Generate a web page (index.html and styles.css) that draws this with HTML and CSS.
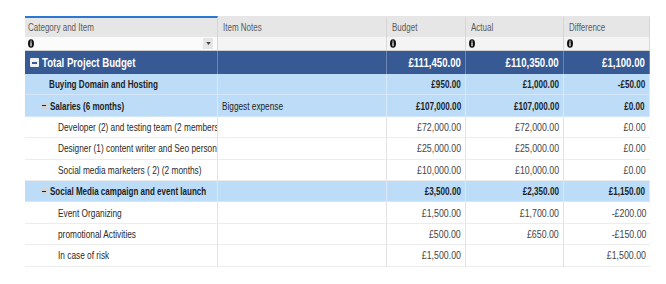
FILE: index.html
```html
<!DOCTYPE html>
<html>
<head>
<meta charset="utf-8">
<link rel="stylesheet" href="styles.css">
</head>
<body>
<div class="grid">
  <div class="row head">
    <div class="cell active"><span class="t">Category and Item</span></div>
    <div class="cell"><span class="t">Item Notes</span></div>
    <div class="cell"><span class="t">Budget</span></div>
    <div class="cell"><span class="t">Actual</span></div>
    <div class="cell"><span class="t">Difference</span></div>
  </div>
  <div class="row filter">
    <div class="cell fcell"><svg class="info" viewBox="0 0 7 10"><ellipse cx="3.5" cy="5" rx="3.5" ry="5" fill="#111"/><rect x="2.8" y="1.6" width="1.4" height="1.3" fill="#fff"/><rect x="2.8" y="3.6" width="1.4" height="4.6" fill="#fff"/></svg><span class="drop"><svg viewBox="0 0 6 4"><path d="M0 0h6L3 4z" fill="#444"/></svg></span></div>
    <div class="cell"></div>
    <div class="cell"><svg class="info" viewBox="0 0 7 10"><ellipse cx="3.5" cy="5" rx="3.5" ry="5" fill="#111"/><rect x="2.8" y="1.6" width="1.4" height="1.3" fill="#fff"/><rect x="2.8" y="3.6" width="1.4" height="4.6" fill="#fff"/></svg></div>
    <div class="cell"><svg class="info" viewBox="0 0 7 10"><ellipse cx="3.5" cy="5" rx="3.5" ry="5" fill="#111"/><rect x="2.8" y="1.6" width="1.4" height="1.3" fill="#fff"/><rect x="2.8" y="3.6" width="1.4" height="4.6" fill="#fff"/></svg></div>
    <div class="cell"><svg class="info" viewBox="0 0 7 10"><ellipse cx="3.5" cy="5" rx="3.5" ry="5" fill="#111"/><rect x="2.8" y="1.6" width="1.4" height="1.3" fill="#fff"/><rect x="2.8" y="3.6" width="1.4" height="4.6" fill="#fff"/></svg></div>
  </div>
  <div class="row total">
    <div class="cell"><span class="tog big"></span><span class="t">Total Project Budget</span></div>
    <div class="cell"></div>
    <div class="cell num"><span class="t">£111,450.00</span></div>
    <div class="cell num"><span class="t">£110,350.00</span></div>
    <div class="cell num"><span class="t">£1,100.00</span></div>
  </div>
  <div class="row group">
    <div class="cell lvl1"><span class="t">Buying Domain and Hosting</span></div>
    <div class="cell"></div>
    <div class="cell num"><span class="t">£950.00</span></div>
    <div class="cell num"><span class="t">£1,000.00</span></div>
    <div class="cell num"><span class="t">-£50.00</span></div>
  </div>
  <div class="row group">
    <div class="cell lvl1t"><span class="tog"></span><span class="t">Salaries (6 months)</span></div>
    <div class="cell note"><span class="t">Biggest expense</span></div>
    <div class="cell num"><span class="t">£107,000.00</span></div>
    <div class="cell num"><span class="t">£107,000.00</span></div>
    <div class="cell num"><span class="t">£0.00</span></div>
  </div>
  <div class="row item">
    <div class="cell lvl2"><span class="t">Developer (2) and testing team (2 members</span></div>
    <div class="cell"></div>
    <div class="cell num"><span class="t">£72,000.00</span></div>
    <div class="cell num"><span class="t">£72,000.00</span></div>
    <div class="cell num"><span class="t">£0.00</span></div>
  </div>
  <div class="row item">
    <div class="cell lvl2"><span class="t">Designer (1) content writer and Seo person</span></div>
    <div class="cell"></div>
    <div class="cell num"><span class="t">£25,000.00</span></div>
    <div class="cell num"><span class="t">£25,000.00</span></div>
    <div class="cell num"><span class="t">£0.00</span></div>
  </div>
  <div class="row item">
    <div class="cell lvl2"><span class="t">Social media marketers ( 2) (2 months)</span></div>
    <div class="cell"></div>
    <div class="cell num"><span class="t">£10,000.00</span></div>
    <div class="cell num"><span class="t">£10,000.00</span></div>
    <div class="cell num"><span class="t">£0.00</span></div>
  </div>
  <div class="row group">
    <div class="cell lvl1t"><span class="tog"></span><span class="t">Social Media campaign and event launch</span></div>
    <div class="cell"></div>
    <div class="cell num"><span class="t">£3,500.00</span></div>
    <div class="cell num"><span class="t">£2,350.00</span></div>
    <div class="cell num"><span class="t">£1,150.00</span></div>
  </div>
  <div class="row item">
    <div class="cell lvl2"><span class="t">Event Organizing</span></div>
    <div class="cell"></div>
    <div class="cell num"><span class="t">£1,500.00</span></div>
    <div class="cell num"><span class="t">£1,700.00</span></div>
    <div class="cell num"><span class="t">-£200.00</span></div>
  </div>
  <div class="row item">
    <div class="cell lvl2"><span class="t">promotional Activities</span></div>
    <div class="cell"></div>
    <div class="cell num"><span class="t">£500.00</span></div>
    <div class="cell num"><span class="t">£650.00</span></div>
    <div class="cell num"><span class="t">-£150.00</span></div>
  </div>
  <div class="row item">
    <div class="cell lvl2"><span class="t">In case of risk</span></div>
    <div class="cell"></div>
    <div class="cell num"><span class="t">£1,500.00</span></div>
    <div class="cell num"></div>
    <div class="cell num"><span class="t">£1,500.00</span></div>
  </div>
  <div class="row empty">
    <div class="cell"></div>
    <div class="cell"></div>
    <div class="cell"></div>
    <div class="cell"></div>
    <div class="cell"></div>
  </div>
</div>
</body>
</html>
```

FILE: styles.css
```css
html, body {
  margin: 0;
  padding: 0;
  background: #fff;
  overflow: hidden;
}
body {
  font-family: "Liberation Sans", Arial, sans-serif;
  font-size: 11px;
  color: #2a2a2a;
}
.grid {
  margin: 16px 0 0 25px;
  width: 625px;
  display: flex;
  flex-direction: column;
}
.row {
  display: grid;
  grid-template-columns: 193px 169px 79px 98px 86px;
  height: 21.4px;
}
.cell {
  box-sizing: border-box;
  border-right: 1px solid #e2e2e2;
  display: flex;
  align-items: center;
  padding: 0 4px;
  white-space: nowrap;
  overflow: hidden;
}
.cell:last-child { border-right: none; }
.num { justify-content: flex-end; padding-right: 5px; }

/* condensed look (Arial Narrow is not installed) */
.t {
  display: inline-block;
  flex: none;
  transform: scaleX(0.78);
  transform-origin: left center;
}
.num .t { transform-origin: right center; }
.item .lvl2 .t { transform: scaleX(0.755); }
.item .num .t { transform: scaleX(0.8); }
.group .t, .total .t { transform: scaleX(0.74); }
.group .lvl1t .t { transform: scaleX(0.73); }
.group .note .t { transform: scaleX(0.75); }

.head { height: 21px; background: #e6e6e6; font-size: 10px; }
.head .t { transform: scaleX(0.8); }
.head .cell {
  color: #5a5a5a;
  padding-left: 5px;
  border-right: 1px solid #d6d6d6;
  border-top: 2px solid transparent;
}
.head .cell.active { border-top: 2px solid #2a78d2; padding-left: 3px; }

.filter { height: 14px; background: #f4f4f4; }
.filter .cell {
  padding-left: 3px;
  border-right: 1px solid #d9d9d9;
  border-bottom: 1px solid #cfcfcf;
}
.filter .fcell { background: #fbfbfb; justify-content: space-between; padding-right: 4px; }
.info { width: 6px; height: 9px; display: block; }
.drop {
  width: 10px; height: 11px;
  background: #e6e6e6;
  display: flex; align-items: center; justify-content: center;
}
.drop svg { width: 5px; height: 3px; display: block; }

.total { height: 23px; background: #375994; color: #fff; font-weight: bold; font-size: 13px; }
.total .cell { border-right: 1px solid #6b86b5; padding-left: 5px; }
.total .num { padding-right: 4px; }

.group { background: #bcdcf8; font-weight: bold; color: #1e1e1e; }
.group .cell { border-right: 1px solid #d8eafb; border-bottom: 1px solid #d2e6f8; }
.group .num { padding-right: 4px; }

.item .cell { border-bottom: 1px solid #ececec; }
.item .num { color: #444; padding-right: 4px; }

.empty { flex: 1; height: 30px; }

.lvl1 { padding-left: 24px; }
.lvl1t { padding-left: 16px; }
.lvl2 { padding-left: 33px; }
.note { font-weight: normal; padding-left: 4px; }

.tog {
  width: 6px; height: 6px;
  background: #d4d4d4;
  border-radius: 1px;
  margin-right: 3px;
  position: relative;
  flex: none;
}
.tog::after {
  content: "";
  position: absolute;
  left: 1px; right: 1px; top: 2.5px; height: 1.2px;
  background: #222;
}
.tog.big {
  width: 9px; height: 9px;
  background: #f0f0f0;
  margin-right: 3px;
}
.tog.big::after { left: 2px; right: 2px; top: 4px; height: 1.5px; background: #375994; }
```
